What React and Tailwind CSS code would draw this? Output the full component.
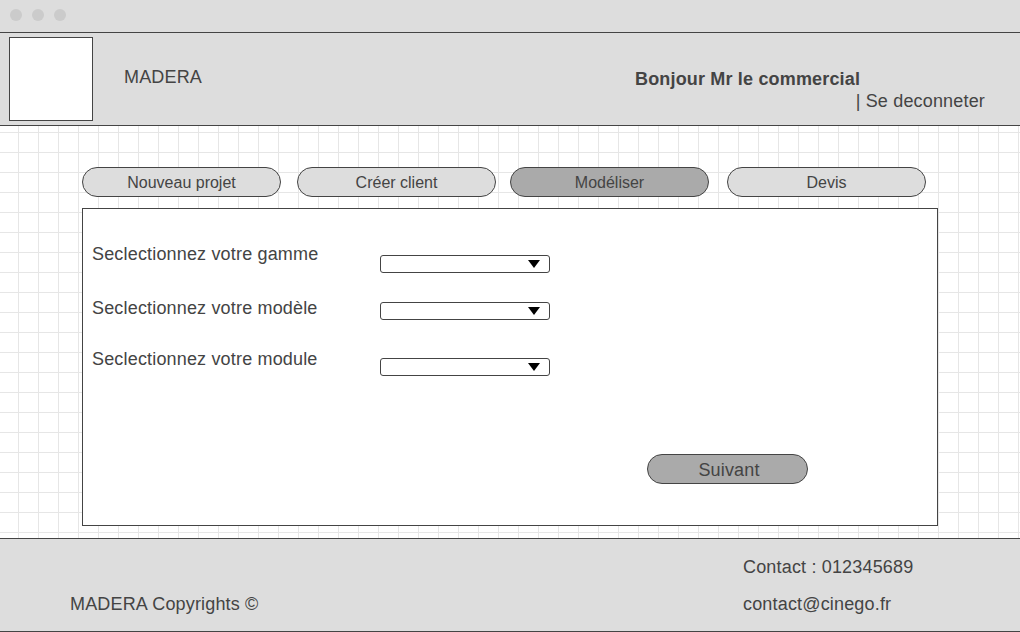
import React from 'react'

const tabs = [
  { label: 'Nouveau projet', ml: 'ml-[82px]', active: false },
  { label: 'Créer client', ml: 'ml-[16px]', active: false },
  { label: 'Modéliser', ml: 'ml-[14px]', active: true },
  { label: 'Devis', ml: 'ml-[18px]', active: false },
]

function Select({ className }) {
  return (
    <div className={`w-[170px] h-[18px] border border-[#444] rounded-[3px] bg-white flex items-center justify-end pr-[9px] ${className}`}>
      <svg width="12" height="8" viewBox="0 0 12 8">
        <path d="M0 0 L12 0 L6 8 Z" fill="#000" />
      </svg>
    </div>
  )
}

export default function App() {
  return (
    <div className="w-[1020px] h-[632px] flex flex-col bg-white text-[#444] font-['Liberation_Sans',Arial,sans-serif] overflow-hidden">
      {/* window bar */}
      <div className="h-[33px] shrink-0 bg-[#dddddd] border-b border-[#444] flex items-center gap-[10px] pl-[10px] pb-[2px]">
        <span className="w-[12px] h-[12px] rounded-full bg-[#cbcbcb]" />
        <span className="w-[12px] h-[12px] rounded-full bg-[#cbcbcb]" />
        <span className="w-[12px] h-[12px] rounded-full bg-[#cbcbcb]" />
      </div>

      {/* header */}
      <div className="h-[93px] shrink-0 bg-[#dddddd] border-b border-[#444] flex items-start tracking-[0.17px]">
        <div className="ml-[9px] mt-[4px] w-[84px] h-[84px] bg-white border border-[#444]" />
        <div className="ml-[31px] mt-[34px] text-[18px] leading-[20px]">MADERA</div>
        <div className="ml-auto mr-[35px] mt-[36px] w-[350px] flex flex-col text-[18px] leading-[20px]">
          <div className="font-bold">Bonjour Mr le commercial</div>
          <div className="mt-[2px] self-end">| Se deconneter</div>
        </div>
      </div>

      {/* main */}
      <div className="h-[412px] shrink-0 bg-white bg-[linear-gradient(to_right,#e6e6e6_1px,transparent_1px),linear-gradient(to_bottom,#e6e6e6_1px,transparent_1px)] bg-[size:20px_20px] bg-[position:18px_6px] flex flex-col">
        <div className="mt-[41px] flex">
          {tabs.map(t => (
            <div
              key={t.label}
              className={`${t.ml} w-[199px] h-[30px] pt-[2px] rounded-full border border-[#444] flex items-center justify-center text-[16px] ${t.active ? 'bg-[#aaaaaa]' : 'bg-[#dddddd]'}`}
            >
              {t.label}
            </div>
          ))}
        </div>

        <div className="ml-[82px] mt-[11px] w-[856px] h-[318px] bg-white border border-[#444] flex flex-col pt-[35px] text-[18px] leading-[20px] tracking-[0.17px]">
          <div className="flex items-start">
            <div className="ml-[9px] w-[288px]">Seclectionnez votre gamme</div>
            <Select className="mt-[11px]" />
          </div>
          <div className="mt-[25px] flex items-start">
            <div className="ml-[9px] w-[288px]">Seclectionnez votre modèle</div>
            <Select className="mt-[4px]" />
          </div>
          <div className="mt-[29px] flex items-start">
            <div className="ml-[9px] w-[288px]">Seclectionnez votre module</div>
            <Select className="mt-[9px]" />
          </div>
          <div className="ml-[564px] mt-[78px] w-[161px] h-[30px] pt-[2px] pl-[3px] rounded-full border border-[#444] bg-[#aaaaaa] flex items-center justify-center text-[18px]">
            Suivant
          </div>
        </div>
      </div>

      {/* footer */}
      <div className="flex-1 bg-[#dddddd] border-t border-b border-[#444] flex items-start text-[18px] leading-[20px] tracking-[0.17px]">
        <div className="ml-[70px] mt-[55px] w-[673px]">MADERA Copyrights ©</div>
        <div className="mt-[18px] flex flex-col">
          <div>Contact : 012345689</div>
          <div className="mt-[17px]">contact@cinego.fr</div>
        </div>
      </div>
    </div>
  )
}
